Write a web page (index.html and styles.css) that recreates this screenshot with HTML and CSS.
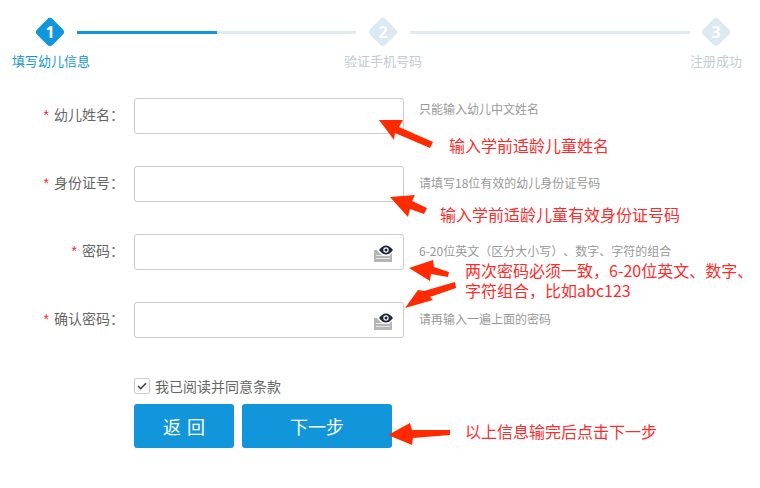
FILE: index.html
```html
<!DOCTYPE html>
<html lang="zh-CN">
<head>
<meta charset="utf-8">
<title>填写幼儿信息</title>
<link rel="stylesheet" href="styles.css">
</head>
<body>
<div class="page">
  <div class="stepper">
    <div class="track">
      <span class="diamond active"><b>1</b></span>
      <span class="line first"></span>
      <span class="diamond"><b>2</b></span>
      <span class="line second"></span>
      <span class="diamond"><b>3</b></span>
    </div>
    <div class="labels">
      <span class="active-label">填写幼儿信息</span>
      <span>验证手机号码</span>
      <span>注册成功</span>
    </div>
  </div>

  <form class="form">
    <div class="row">
      <label class="label"><i>*</i> 幼儿姓名：</label>
      <div class="field"></div>
      <span class="hint hint-top">只能输入幼儿中文姓名</span>
    </div>
    <div class="row">
      <label class="label"><i>*</i> 身份证号：</label>
      <div class="field"></div>
      <span class="hint">请填写18位有效的幼儿身份证号码</span>
    </div>
    <div class="row">
      <label class="label"><i>*</i> 密码：</label>
      <div class="field">
        <svg class="eye" viewBox="0 0 19 17"><path class="kb" d="M0 5h18v12H0z"/><path class="keys" d="M2 10h14v1H2zM2 13h14v1H2z"/><path class="halo" d="M3 5C6 1 9-1 12-1s6 2 8 6c-2 4-5 6-8 6S6 9 3 5z"/><path class="iris" d="M5 5c2.500-3 4.500-4.500 7-4.500S16.500 2 19 5c-2.500 3-4.500 4.500-7 4.500S7.500 8 5 5z"/><circle class="ring" cx="12" cy="5" r="2.700"/><circle class="iris" cx="12" cy="5" r="1.500"/></svg>
      </div>
      <span class="hint">6-20位英文（区分大小写）、数字、字符的组合</span>
    </div>
    <div class="row">
      <label class="label"><i>*</i> 确认密码：</label>
      <div class="field">
        <svg class="eye" viewBox="0 0 19 17"><path class="kb" d="M0 5h18v12H0z"/><path class="keys" d="M2 10h14v1H2zM2 13h14v1H2z"/><path class="halo" d="M3 5C6 1 9-1 12-1s6 2 8 6c-2 4-5 6-8 6S6 9 3 5z"/><path class="iris" d="M5 5c2.500-3 4.500-4.500 7-4.500S16.500 2 19 5c-2.500 3-4.500 4.500-7 4.500S7.500 8 5 5z"/><circle class="ring" cx="12" cy="5" r="2.700"/><circle class="iris" cx="12" cy="5" r="1.500"/></svg>
      </div>
      <span class="hint">请再输入一遍上面的密码</span>
    </div>
    <div class="agree">
      <span class="check"><svg viewBox="0 0 16 16"><path d="M3.500 8l3 3.200 6-6.400"/></svg></span>
      <span>我已阅读并同意条款</span>
    </div>
    <div class="actions">
      <button type="button" class="btn back">返 回</button>
      <button type="button" class="btn next">下一步</button>
    </div>
  </form>

  <svg class="arrows" viewBox="0 0 760 488">
    <polygon points="379,120 403,120 399,127 433,142 430,148 395,133 394,140"/>
    <polygon points="390,197 415,195 412,201 427,208 424,214 410,209 408,217"/>
    <polygon points="409,268 433,260 434,267 449,272 448,277 431,274 430,281"/>
    <polygon points="405,308 418,290 424,291 455,282 456,288 430,297 433,300"/>
    <polygon points="388,435 410,423 412,430 450,430 450,435 413,438 412,445"/>
  </svg>
  <p class="note n1">输入学前适龄儿童姓名</p>
  <p class="note n2">输入学前适龄儿童有效身份证号码</p>
  <p class="note n3">两次密码必须一致，6-20位英文、数字、<br>字符组合，比如abc123</p>
  <p class="note n4">以上信息输完后点击下一步</p>
</div>
</body>
</html>
```
FILE: styles.css
```css
* { box-sizing: border-box; }
html, body { margin: 0; padding: 0; background: #fff; }
body { font-family: "Noto Sans CJK SC", "Open Sans", sans-serif; text-spacing-trim: space-all; }
.page { position: relative; width: 760px; height: 488px; overflow: hidden; }

.stepper { padding-top: 17px; }
.track { display: flex; align-items: center; padding-left: 35px; }
.diamond { position: relative; flex: none; width: 30px; height: 30px; display: flex; align-items: center; justify-content: center; }
.diamond::before { content: ""; position: absolute; left: 4px; top: 4px; width: 22px; height: 22px; border-radius: 4px; background: #dce9f3; transform: rotate(45deg); }
.diamond.active::before { background: #1296db; }
.diamond b { position: relative; color: #fff; font: 700 16px/1 "Open Sans", sans-serif; }
.line { flex: none; height: 3px; margin-left: 12px; margin-right: 12px; background: #dfeaf3; }
.line.first { width: 279px; background: linear-gradient(to right, #1296db 140px, #dfeaf3 140px); }
.line.second { width: 280px; margin-right: 11px; }
.labels { display: grid; grid-template-columns: 332px 346px auto; padding-left: 12px; margin-top: 4px; font-size: 13px; line-height: 19px; color: #c3ccd3; }
.active-label { color: #1296db; }

.form { display: block; margin-top: 28px; }
.row { display: flex; align-items: center; height: 36px; margin-bottom: 32px; }
.label { width: 124px; margin-right: 10px; padding-bottom: 4px; text-align: right; font-size: 14px; line-height: 20px; color: #666; }
.label i { font-style: normal; margin-right: 2px; color: #f5222d; font-family: "Liberation Sans", sans-serif; }
.field { position: relative; width: 270px; height: 36px; border: 1px solid #ccc; border-radius: 3px; background: #fff; }
.eye { position: absolute; right: 10px; top: 10px; width: 19px; height: 17px; overflow: visible; }
.kb { fill: #b5b5b5; }
.keys { fill: #e8e8e8; }
.halo { fill: #fff; }
.iris { fill: #1d2636; }
.ring { fill: #fff; }
.hint { margin-left: 15px; padding-bottom: 2px; font-size: 12px; line-height: 18px; color: #999; }
.hint-top { padding-bottom: 14px; }

.agree { display: flex; align-items: center; gap: 5px; margin: 39px 0 0 134px; font-size: 14px; line-height: 18px; color: #666; }
.check { width: 16px; height: 16px; border: 1px solid #ccc; border-radius: 2px; display: block; }
.check svg { display: block; width: 14px; height: 14px; }
.check path { fill: none; stroke: #333; stroke-width: 1.500; }
.actions { display: flex; gap: 8px; margin: 9px 0 0 134px; }
.btn { height: 44px; border: 0; border-radius: 3px; background: #1296db; color: #fff; font-family: inherit; font-size: 18px; padding: 0; }
.back { width: 100px; word-spacing: 2px; }
.next { width: 150px; }

.arrows { position: absolute; left: 0; top: 0; width: 760px; height: 488px; pointer-events: none; }
.arrows polygon { fill: #ff2a00; }
.note { position: absolute; margin: 0; font-size: 16px; line-height: 20px; color: #ff2b2b; white-space: nowrap; }
.n1 { left: 449px; top: 135px; }
.n2 { left: 440px; top: 204px; }
.n3 { left: 465px; top: 260px; }
.n4 { left: 465px; top: 421px; }
```
